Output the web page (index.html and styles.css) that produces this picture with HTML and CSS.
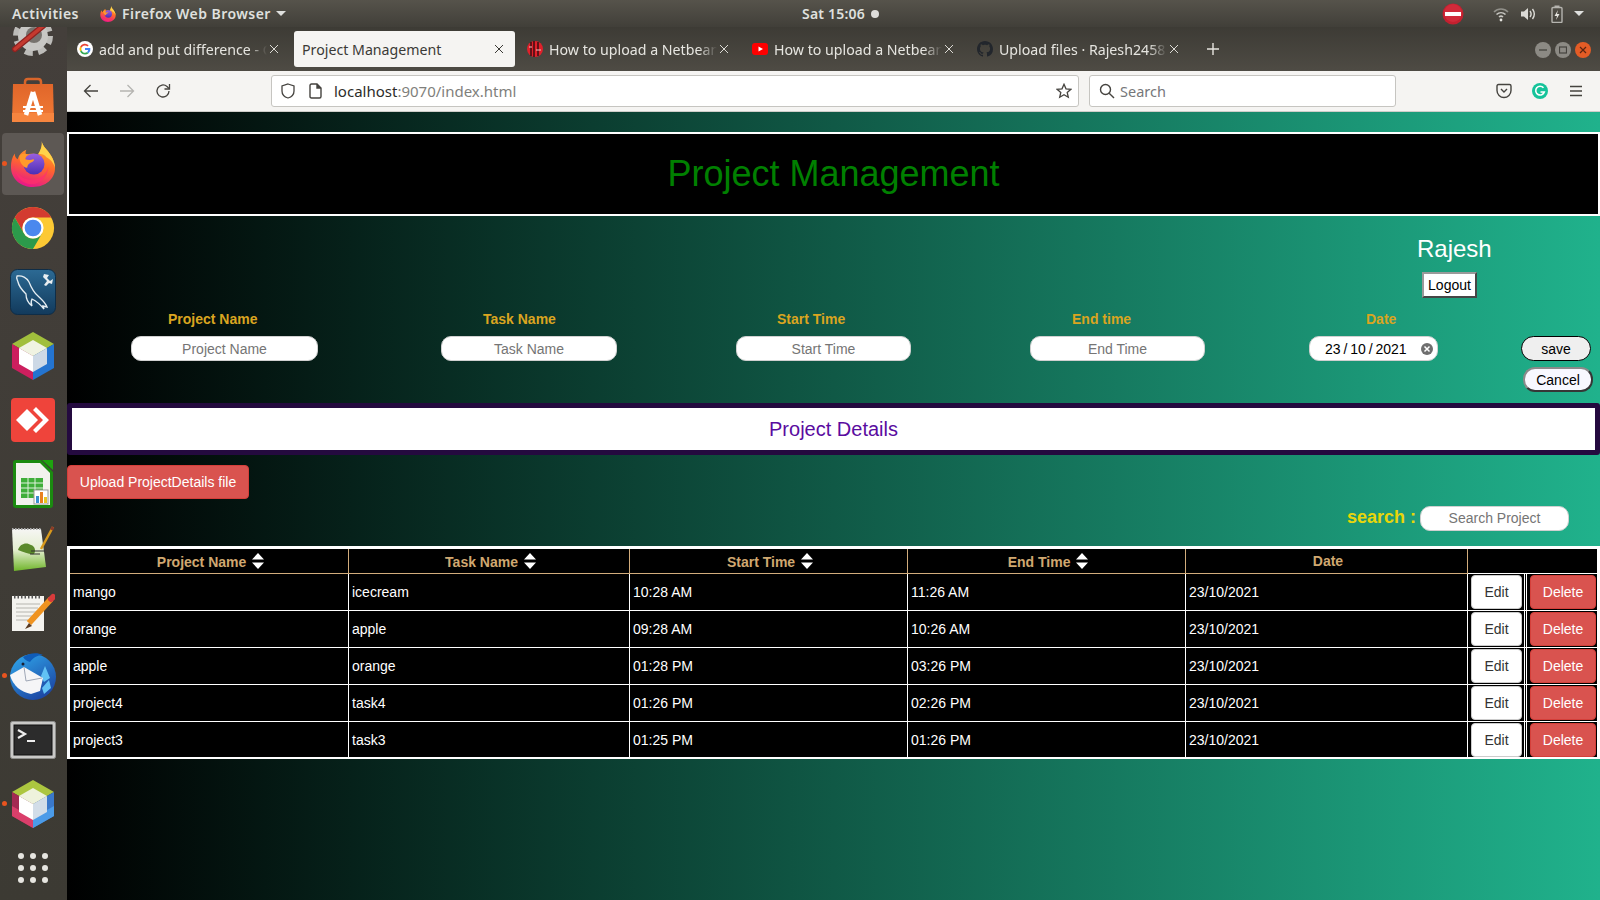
FILE: index.html
```html
<!DOCTYPE html>
<html lang="en">
<head>
<meta charset="utf-8">
<title>Project Management</title>
<link rel="stylesheet" href="styles.css">
</head>
<body>
<header class="topbar">
  <span class="tb-text activities">Activities</span>
  <svg class="tb-ff" width="16" height="16" viewBox="0 0 48 48">
    <defs>
      <linearGradient id="ffBody" x1="0.7" y1="0" x2="0.4" y2="1"><stop offset="0" stop-color="#ffc22e"/><stop offset="0.5" stop-color="#ff6a2a"/><stop offset="1" stop-color="#e8168a"/></linearGradient>
      <linearGradient id="ffGlobe" x1="0.5" y1="0" x2="0.5" y2="1"><stop offset="0" stop-color="#9a5fe0"/><stop offset="1" stop-color="#4a2fb5"/></linearGradient>
      <g id="ffIcon">
        <path d="M33 0c1 6 6 9 9 14 4 6 5 11 5 14 0 12-10 20-23 20C11 48 1 39 1 27 1 22 2 17 5 13c0 3 1 5 3 6 1-4 4-8 9-10-1 2-1 4 0 5 4-1 9-1 12 1 3-4 5-10 4-15z" fill="url(#ffBody)"/>
        <path d="M33 0c1 6 6 9 9 14 4 6 5 11 5 14-2-6-5-9-9-11-2-3-6-4-9-3 3-4 5-10 4-14z" fill="#ffd24a"/>
        <circle cx="25" cy="24" r="11" fill="url(#ffGlobe)"/>
        <path d="M4 26c2 10 12 16 22 14 7-1 12-6 14-13-1 11-9 18-18 18C13 45 6 37 4 26z" fill="#ff2f6d" opacity="0.75"/>
        <path d="M10 15c3-2 6-2 9-1-2 1-3 3-3 5 3 1 6 1 8 0 2 0 1 2-1 3-3 1-5 3-5 6-5-1-9-7-8-13z" fill="#ff9a2a"/>
      </g>
    </defs>
    <use href="#ffIcon"/>
  </svg>
  <span class="tb-text app-name">Firefox Web Browser</span>
  <span class="caret caret-app"></span>
  <span class="tb-text clock">Sat 15:06</span>
  <span class="clock-dot"></span>
  <svg class="no-entry" width="22" height="22" viewBox="0 0 22 22"><circle cx="11" cy="11" r="10.5" fill="#c3202f"/><circle cx="11" cy="10" r="9" fill="#d12a3a"/><rect x="3" y="9" width="16" height="4" fill="#fff"/></svg>
  <svg class="tray-wifi" width="16" height="16" viewBox="0 0 16 16" fill="none" stroke="#c9c8c3" stroke-width="1.6"><path d="M1 6c4-4 10-4 14 0" opacity=".55"/><path d="M3.5 8.5c2.6-2.4 6.4-2.4 9 0"/><path d="M6 11c1.2-1 2.8-1 4 0"/><circle cx="8" cy="14" r="1.4" fill="#e6e5e0" stroke="none"/></svg>
  <svg class="tray-vol" width="16" height="16" viewBox="0 0 16 16" fill="none" stroke="#dcdbd6" stroke-width="1.4"><path d="M1 5.5h3L8 2v12L4 10.5H1z" fill="#dcdbd6" stroke="none"/><path d="M10 5c1.2 1.6 1.2 4.400 0 6"/><path d="M12.500 3c2.200 3 2.200 7 0 10"/></svg>
  <svg class="tray-bat" width="12" height="18" viewBox="0 0 12 18" fill="none"><rect x="1" y="2.500" width="10" height="15" rx="1" stroke="#b5b4af" stroke-width="1.400"/><rect x="3.500" y="0.500" width="5" height="2" fill="#b5b4af"/><path d="M7 5L3.500 11H6L5 15l3.500-6H6z" fill="#e6e5e0"/></svg>
  <span class="caret caret-tray"></span>
</header>

<div class="desktop">
  <nav class="dock">
    <div class="dock-item">
      <svg width="46" height="46" viewBox="0 0 46 46"><circle cx="23" cy="23" r="15" fill="none" stroke="#bdbcb9" stroke-width="10" stroke-dasharray="7 4.800"/><circle cx="23" cy="23" r="15" fill="#c8c7c4"/><circle cx="24" cy="22" r="8" fill="#77736e"/><path d="M5 36L33 13" stroke="#8e2220" stroke-width="6" stroke-linecap="round"/><path d="M5 36L33 13" stroke="#c5392f" stroke-width="3.500" stroke-linecap="round"/></svg>
    </div>
    <div class="dock-item">
      <svg width="44" height="46" viewBox="0 0 44 46"><defs><linearGradient id="bag" x1="0" y1="0" x2="0" y2="1"><stop offset="0" stop-color="#e0662a"/><stop offset="1" stop-color="#f27b36"/></linearGradient></defs><path d="M14 10V5q0-3 3-3h10q3 0 3 3v5" fill="none" stroke="#d8652a" stroke-width="2.500"/><path d="M2 7h40l1 38H1z" fill="url(#bag)"/><path d="M1 36h42v9H1z" fill="#f6853f"/><path d="M22 15L15 38M22 15L29 38" stroke="#fff" stroke-width="4.500" fill="none"/><path d="M12 30h20M12 34h20" stroke="#fff" stroke-width="1.800"/></svg>
    </div>
    <div class="dock-item dock-active has-dot">
      <svg width="46" height="46" viewBox="0 0 48 48"><use href="#ffIcon"/></svg>
    </div>
    <div class="dock-item">
      <svg width="46" height="46" viewBox="0 0 48 48"><circle cx="24" cy="24" r="22" fill="#fcc934"/><path d="M24 13H43.050A22 22 0 0 0 4.950 13L14.470 29.500A11 11 0 0 1 24 13Z" fill="#d33b30"/><path d="M14.470 29.500L4.950 13A22 22 0 0 0 24 46L33.530 29.500A11 11 0 0 1 14.470 29.500Z" fill="#2c9a4b"/><circle cx="24" cy="24" r="11" fill="#fff"/><circle cx="24" cy="24" r="8.700" fill="#4a88ee"/></svg>
    </div>
    <div class="dock-item">
      <svg width="46" height="46" viewBox="0 0 46 46"><defs><linearGradient id="sql" x1="0" y1="0" x2="0" y2="1"><stop offset="0" stop-color="#2c6a94"/><stop offset="1" stop-color="#123a5c"/></linearGradient></defs><rect x="0.500" y="0.500" width="45" height="45" rx="7" fill="url(#sql)" stroke="#0f2d47"/><path d="M7 7c5-1 10 2 12 6 2 5 4 10 9 14 3 3 7 6 9 11l-4-1 1 3c-5-6-8-8-12-10-1 2-1 5 0 7-4-3-6-7-6-12-3-3-7-7-8-12-1-3-2-4-1-6z" fill="none" stroke="#e6eef3" stroke-width="1.300"/><path d="M34 5l-1 3 4 4-3 4 2 1 3-3 3 1 1-5-3 2-3-3 2-3z" fill="#e9eef1"/></svg>
    </div>
    <div class="dock-item">
      <svg width="42" height="48" viewBox="0 0 42 48"><path d="M21 0L42 12L21 24L0 12Z" fill="#a1bf3c"/><path d="M0 12L21 24V48L0 36Z" fill="#cc1f5e"/><path d="M42 12L21 24V48L42 36Z" fill="#2474d0"/><path d="M21 8L35 16L21 24L7 16Z" fill="#f0f3e2"/><path d="M7 16L21 24V40L7 32Z" fill="#fff"/><path d="M35 16L21 24V40L35 32Z" fill="#cdd9e6"/></svg>
    </div>
    <div class="dock-item">
      <svg width="44" height="44" viewBox="0 0 44 44"><rect width="44" height="44" rx="4" fill="#ef443b"/><path d="M16 11L27 22L16 33L5 22Z" fill="#fff"/><path d="M25 9L38 22L25 35L22 32L32 22L22 12Z" fill="#fff"/></svg>
    </div>
    <div class="dock-item">
      <svg width="40" height="48" viewBox="0 0 40 48"><path d="M3 0H28L40 12V45q0 3-3 3H3q-3 0-3-3V3q0-3 3-3z" fill="#1b8a10"/><path d="M3 3H27L37 13V45H3z" fill="#f2f2ee"/><path d="M29 0H40V10z" fill="#1ea30f"/><g fill="#3fae3a"><rect x="8" y="18" width="22" height="20"/></g><path d="M8 23h22M8 28h22M8 33h22M15 18v20M22 18v20" stroke="#dff1dc" stroke-width="1"/><rect x="21" y="30" width="14" height="14" fill="#fff" stroke="#999"/><rect x="23" y="36" width="3" height="7" fill="#3a8fd0"/><rect x="27" y="32" width="3" height="11" fill="#e8801f"/><rect x="31" y="37" width="3" height="6" fill="#e8c51f"/></svg>
    </div>
    <div class="dock-item">
      <svg width="44" height="46" viewBox="0 0 44 46"><defs><linearGradient id="npq" x1="0" y1="0" x2="0" y2="1"><stop offset="0" stop-color="#f6f6f4"/><stop offset="0.5" stop-color="#e4efcf"/><stop offset="1" stop-color="#6fb52a"/></linearGradient></defs><path d="M1 4H30L35 42L3 46Z" fill="url(#npq)"/><path d="M1 4H30" stroke="#aaa" stroke-width="2" stroke-dasharray="1.500 1.500"/><path d="M7 25c2-7 9-8 13-5 4 1 5 6 3 9-4 1-10-2-16-4z" fill="#5a8a2a"/><path d="M19 29h10M20 26h14" stroke="#333" stroke-width="1.200"/><path d="M42 2L30 24" stroke="#d89a1c" stroke-width="2.500"/><path d="M42 2l-1.500 3" stroke="#8a3b2a" stroke-width="3"/></svg>
    </div>
    <div class="dock-item">
      <svg width="44" height="38" viewBox="0 0 44 38"><rect x="1" y="3" width="32" height="35" fill="#f4f3ef"/><path d="M3 4h28" stroke="#555" stroke-width="3" stroke-dasharray="1.500 2"/><path d="M5 11h24M5 15h22M5 19h24M5 23h18M5 27h12" stroke="#b6b5b0" stroke-width="1.200"/><path d="M40 6L18 30" stroke="#ef9320" stroke-width="6"/><path d="M40 6l2-2" stroke="#d83b3b" stroke-width="6" stroke-linecap="round"/><path d="M18 30l-4 6 7-3z" fill="#5a3a20"/></svg>
    </div>
    <div class="dock-item has-dot">
      <svg width="48" height="48" viewBox="0 0 48 48"><defs><linearGradient id="tb" x1="0.200" y1="0" x2="0.800" y2="1"><stop offset="0" stop-color="#2fa3e8"/><stop offset="1" stop-color="#1b3f9e"/></linearGradient></defs><circle cx="24" cy="25" r="23" fill="url(#tb)"/><path d="M14 5c6-4 14-5 20-2-6 0-10 3-13 7-3-1-5-2-7-5z" fill="#0f5cb8"/><path d="M36 14l5 12-6 4-3-6zM40 28l2 8-7 6-2-6z" fill="#62c2f4"/><path d="M1 23L15 15 34 26 31 39 22 42C12 40 4 34 1 23z" fill="#f5f5f7"/><path d="M15 15L17 29 33 26" fill="none" stroke="#9fa7b6" stroke-width="1"/><circle cx="14" cy="12" r="1.500" fill="#1a1f33"/></svg>
    </div>
    <div class="dock-item">
      <svg width="46" height="38" viewBox="0 0 46 38"><rect x="0.500" y="0.500" width="45" height="37" rx="2" fill="#c9c9c7" stroke="#8e8e8c"/><rect x="4" y="4" width="38" height="30" fill="#2c2c2c" stroke="#111"/><path d="M8 9l7 4-7 4" fill="none" stroke="#eee" stroke-width="2.200"/><path d="M17 20h8" stroke="#eee" stroke-width="2"/></svg>
    </div>
    <div class="dock-item has-dot">
      <svg width="42" height="48" viewBox="0 0 42 48"><path d="M21 0L42 12L21 24L0 12Z" fill="#acc63f"/><path d="M0 12L21 24V48L0 36Z" fill="#a32a52"/><path d="M0 26L21 38V48L0 36Z" fill="#da3f6b"/><path d="M42 12L21 24V48L42 36Z" fill="#3a78c9"/><path d="M42 26L21 38V48L42 36Z" fill="#4b9be8"/><path d="M21 8L35 16L21 24L7 16Z" fill="#eef2dc"/><path d="M7 16L21 24V40L7 32Z" fill="#fff"/><path d="M35 16L21 24V40L35 32Z" fill="#d2dde8"/></svg>
    </div>
    <div class="dock-item">
      <svg width="30" height="30" viewBox="0 0 30 30" fill="#e6e5e0"><circle cx="3" cy="3" r="3"/><circle cx="15" cy="3" r="3"/><circle cx="27" cy="3" r="3"/><circle cx="3" cy="15" r="3"/><circle cx="15" cy="15" r="3"/><circle cx="27" cy="15" r="3"/><circle cx="3" cy="27" r="3"/><circle cx="15" cy="27" r="3"/><circle cx="27" cy="27" r="3"/></svg>
    </div>
  </nav>

  <div class="browser">
    <div class="tabstrip">
      <div class="tab">
        <svg class="favicon" width="16" height="16" viewBox="0 0 16 16"><circle cx="8" cy="8" r="8" fill="#fff"/><path d="M8 4.500a3.500 3.500 0 0 1 2.400.950l1.300-1.300A5.500 5.500 0 0 0 3.100 5.500l1.500 1.200A3.500 3.500 0 0 1 8 4.500z" fill="#ea4335"/><path d="M3.100 5.500a5.500 5.500 0 0 0 0 5l1.500-1.200a3.500 3.500 0 0 1 0-2.600z" fill="#fbbc05"/><path d="M8 13.500a5.400 5.400 0 0 0 3.600-1.300l-1.500-1.100A3.500 3.500 0 0 1 4.600 9.300l-1.500 1.200A5.500 5.500 0 0 0 8 13.500z" fill="#34a853"/><path d="M13.300 7H8v2.100h3.100a2.700 2.700 0 0 1-1 2l1.500 1.100A5.300 5.300 0 0 0 13.300 7z" fill="#4285f4"/></svg>
        <span class="tab-title">add and put difference - G</span>
        <svg class="tab-close" width="10" height="10" viewBox="0 0 10 10"><path d="M1 1l8 8M9 1l-8 8"/></svg>
      </div>
      <div class="tab tab-active">
        <span class="tab-title">Project Management</span>
        <svg class="tab-close" width="10" height="10" viewBox="0 0 10 10"><path d="M1 1l8 8M9 1l-8 8"/></svg>
      </div>
      <div class="tab">
        <svg class="favicon" width="16" height="16" viewBox="0 0 16 16"><circle cx="8" cy="8" r="8" fill="#e0202a"/><path d="M4 1v14M7 0v16M11 1v14" stroke="#3a0d10" stroke-width="1.500"/><path d="M2 6h3M9 9h5" stroke="#f5c0c0" stroke-width="1"/></svg>
        <span class="tab-title">How to upload a Netbean</span>
        <svg class="tab-close" width="10" height="10" viewBox="0 0 10 10"><path d="M1 1l8 8M9 1l-8 8"/></svg>
      </div>
      <div class="tab">
        <svg class="favicon" width="16" height="16" viewBox="0 0 16 16"><rect y="2" width="16" height="12" rx="3" fill="#f00"/><path d="M6.500 5.500L11 8l-4.500 2.500z" fill="#fff"/></svg>
        <span class="tab-title">How to upload a Netbean</span>
        <svg class="tab-close" width="10" height="10" viewBox="0 0 10 10"><path d="M1 1l8 8M9 1l-8 8"/></svg>
      </div>
      <div class="tab">
        <svg class="favicon" width="16" height="16" viewBox="0 0 16 16"><path fill="#22262c" d="M8 0C3.580 0 0 3.580 0 8c0 3.540 2.290 6.530 5.470 7.590.4.070.55-.17.55-.38 0-.19-.01-.82-.01-1.490-2.010.37-2.530-.49-2.690-.94-.09-.23-.48-.94-.82-1.130-.28-.15-.68-.52-.01-.53.63-.01 1.080.58 1.230.82.720 1.210 1.870.87 2.330.66.070-.52.280-.87.510-1.070-1.780-.2-3.640-.89-3.640-3.950 0-.87.310-1.590.820-2.150-.08-.2-.36-1.020.08-2.120 0 0 .67-.21 2.200.82.640-.18 1.320-.27 2-.27s1.360.09 2 .27c1.530-1.040 2.200-.82 2.200-.82.440 1.100.16 1.920.08 2.120.51.560.82 1.270.82 2.150 0 3.070-1.870 3.750-3.650 3.950.29.250.54.730.54 1.480 0 1.070-.01 1.930-.01 2.200 0 .21.150.46.550.38A8.010 8.010 0 0 0 16 8c0-4.420-3.580-8-8-8z"/></svg>
        <span class="tab-title">Upload files · Rajesh2458</span>
        <svg class="tab-close" width="10" height="10" viewBox="0 0 10 10"><path d="M1 1l8 8M9 1l-8 8"/></svg>
      </div>
      <svg class="new-tab" width="14" height="14" viewBox="0 0 14 14"><path d="M7 1v12M1 7h12" stroke="#e8e6e0" stroke-width="1.400"/></svg>
      <div class="winctl">
        <span class="wbtn"><svg width="8" height="8" viewBox="0 0 8 8"><path d="M0 4h8" stroke="#45433e" stroke-width="1.300"/></svg></span>
        <span class="wbtn"><svg width="8" height="8" viewBox="0 0 8 8"><rect x="0.500" y="1" width="7" height="6" fill="none" stroke="#45433e" stroke-width="1.200"/></svg></span>
        <span class="wbtn wbtn-close"><svg width="8" height="8" viewBox="0 0 8 8"><path d="M1 1l6 6M7 1l-6 6" stroke="#5a2410" stroke-width="1.200"/></svg></span>
      </div>
    </div>

    <div class="navbar">
      <svg class="nav-back" width="16" height="16" viewBox="0 0 16 16" fill="none" stroke="#45433f" stroke-width="1.300"><path d="M15 8H1.500M7.500 2L1.500 8l6 6"/></svg>
      <svg class="nav-fwd" width="16" height="16" viewBox="0 0 16 16" fill="none" stroke="#b5b4b1" stroke-width="1.300"><path d="M1 8h13.500M8.500 2l6 6-6 6"/></svg>
      <svg class="nav-reload" width="16" height="16" viewBox="0 0 16 16" fill="none" stroke="#45433f" stroke-width="1.300"><path d="M14 8a6 6 0 1 1-2-4.500L14 5.500"/><path d="M14.500 1v5h-5" stroke-width="1.300"/></svg>
      <div class="urlbar">
        <svg class="url-shield" width="16" height="16" viewBox="0 0 16 16" fill="none" stroke="#45433f" stroke-width="1.300"><path d="M8 1l6 2v5c0 3.500-2.500 6-6 7-3.500-1-6-3.500-6-7V3z"/></svg>
        <svg class="url-page" width="13" height="16" viewBox="0 0 13 16" fill="none" stroke="#45433f" stroke-width="1.400"><path d="M1 2.500q0-1.500 1.500-1.500H8l4 4v8.500q0 1.500-1.500 1.500h-8Q1 15 1 13.500z"/><path d="M8 1v4h4" fill="#45433f"/></svg>
        <span class="url-text">localhost<span class="url-dim">:9070/index.html</span></span>
        <svg class="url-star" width="16" height="16" viewBox="0 0 16 16" fill="none" stroke="#45433f" stroke-width="1.300"><path d="M8 1.300l2 4.500 4.900.5-3.700 3.200 1.100 4.800L8 11.800l-4.300 2.500 1.100-4.800L1.100 6.300 6 5.800z"/></svg>
      </div>
      <div class="searchbar">
        <svg width="16" height="16" viewBox="0 0 16 16" fill="none" stroke="#45433f" stroke-width="1.400"><circle cx="6.500" cy="6.500" r="5"/><path d="M10.200 10.200L15 15"/></svg>
        <span class="search-ph">Search</span>
      </div>
      <svg class="nav-pocket" width="16" height="16" viewBox="0 0 16 16" fill="none" stroke="#45433f" stroke-width="1.400"><path d="M1 3q0-1.500 1.500-1.500h11Q15 1.500 15 3v4.500a7 7 0 0 1-14 0z"/><path d="M5 6l3 3 3-3"/></svg>
      <svg class="nav-gram" width="16" height="16" viewBox="0 0 16 16"><circle cx="8" cy="8" r="8" fill="#15c39a"/><path d="M11.500 4.800A4.400 4.400 0 1 0 12.300 9H8.500" fill="none" stroke="#fff" stroke-width="1.600"/></svg>
      <svg class="nav-menu" width="14" height="12" viewBox="0 0 14 12" stroke="#45433f" stroke-width="1.300"><path d="M1 1.500h12M1 6h12M1 10.500h12"/></svg>
    </div>

    <main class="page">
      <h1 class="app-title">Project Management</h1>

      <div class="user-block">
        <div class="user-name">Rajesh</div>
        <button class="logout-btn">Logout</button>
      </div>

      <form class="entry-form">
        <div class="field field-project">
          <label class="field-label">Project Name</label>
          <input class="pill-input" type="text" placeholder="Project Name">
        </div>
        <div class="field field-task">
          <label class="field-label">Task Name</label>
          <input class="pill-input" type="text" placeholder="Task Name">
        </div>
        <div class="field field-start">
          <label class="field-label">Start Time</label>
          <input class="pill-input" type="text" placeholder="Start Time">
        </div>
        <div class="field field-end">
          <label class="field-label">End time</label>
          <input class="pill-input" type="text" placeholder="End Time">
        </div>
        <div class="field field-date">
          <label class="field-label">Date</label>
          <div class="date-input">
            <span class="date-value">23 / 10 / 2021</span>
            <svg width="12" height="12" viewBox="0 0 12 12"><circle cx="6" cy="6" r="6" fill="#6e6e6e"/><path d="M3.500 3.500l5 5M8.500 3.500l-5 5" stroke="#fff" stroke-width="1.500"/></svg>
          </div>
        </div>
        <div class="form-actions">
          <button type="button" class="save-btn">save</button>
          <button type="button" class="cancel-btn">Cancel</button>
        </div>
      </form>

      <h2 class="details-title">Project Details</h2>

      <button class="upload-btn">Upload ProjectDetails file</button>

      <div class="search-row">
        <span class="search-label">search :</span>
        <input class="pill-input search-input" type="text" placeholder="Search Project">
      </div>

      <table class="data-table">
        <colgroup>
          <col class="c1"><col class="c2"><col class="c3"><col class="c4"><col class="c5"><col class="c6"><col class="c7">
        </colgroup>
        <thead>
          <tr>
            <th class="th-sort">Project Name <svg class="sort" width="12" height="16" viewBox="0 0 12 16" fill="#fff"><path d="M6 0l6 6.500H0zM0 9.500h12L6 16z"/></svg></th>
            <th class="th-sort">Task Name <svg class="sort" width="12" height="16" viewBox="0 0 12 16" fill="#fff"><path d="M6 0l6 6.500H0zM0 9.500h12L6 16z"/></svg></th>
            <th class="th-sort">Start Time <svg class="sort" width="12" height="16" viewBox="0 0 12 16" fill="#fff"><path d="M6 0l6 6.500H0zM0 9.500h12L6 16z"/></svg></th>
            <th class="th-sort">End Time <svg class="sort" width="12" height="16" viewBox="0 0 12 16" fill="#fff"><path d="M6 0l6 6.500H0zM0 9.500h12L6 16z"/></svg></th>
            <th class="th-date">Date</th>
            <th class="th-actions" colspan="2"></th>
          </tr>
        </thead>
        <tbody>
          <tr><td>mango</td><td>icecream</td><td>10:28 AM</td><td>11:26 AM</td><td>23/10/2021</td><td class="td-edit"><button class="edit-btn">Edit</button></td><td class="td-del"><button class="del-btn">Delete</button></td></tr>
          <tr><td>orange</td><td>apple</td><td>09:28 AM</td><td>10:26 AM</td><td>23/10/2021</td><td class="td-edit"><button class="edit-btn">Edit</button></td><td class="td-del"><button class="del-btn">Delete</button></td></tr>
          <tr><td>apple</td><td>orange</td><td>01:28 PM</td><td>03:26 PM</td><td>23/10/2021</td><td class="td-edit"><button class="edit-btn">Edit</button></td><td class="td-del"><button class="del-btn">Delete</button></td></tr>
          <tr><td>project4</td><td>task4</td><td>01:26 PM</td><td>02:26 PM</td><td>23/10/2021</td><td class="td-edit"><button class="edit-btn">Edit</button></td><td class="td-del"><button class="del-btn">Delete</button></td></tr>
          <tr><td>project3</td><td>task3</td><td>01:25 PM</td><td>01:26 PM</td><td>23/10/2021</td><td class="td-edit"><button class="edit-btn">Edit</button></td><td class="td-del"><button class="del-btn">Delete</button></td></tr>
        </tbody>
      </table>
    </main>
  </div>
</div>
</body>
</html>
```
FILE: styles.css
```css
* { box-sizing: border-box; }
html, body { margin: 0; padding: 0; }
body {
  width: 1600px;
  height: 900px;
  overflow: hidden;
  display: flex;
  flex-direction: column;
  font-family: "Liberation Sans", Arial, sans-serif;
  font-size: 14px;
  background: #000;
}

/* GNOME top bar */
.topbar {
  height: 27px;
  flex: none;
  display: flex;
  align-items: center;
  background: linear-gradient(#56534b, #413f39);
}
.tb-text {
  font-family: "Noto Sans", sans-serif;
  font-weight: 600;
  font-size: 14px;
  letter-spacing: 0.45px;
  color: #dfe0de;
  white-space: nowrap;
}
.activities { margin-left: 12px; width: 68px; }
.tb-ff { margin-left: 20px; }
.app-name { margin-left: 6px; width: 149px; }
.caret {
  width: 0;
  height: 0;
  border-left: 5px solid transparent;
  border-right: 5px solid transparent;
  border-top: 5px solid #dfe0de;
}
.caret-app { margin-left: 5px; }
.clock { margin-left: 516px; width: 64px; letter-spacing: 0.2px; }
.clock-dot {
  width: 8px;
  height: 8px;
  border-radius: 50%;
  background: #dfdedb;
  margin-left: 5px;
}
.no-entry { margin-left: 563px; }
.tray-wifi { margin-left: 29px; }
.tray-vol { margin-left: 11px; }
.tray-bat { margin-left: 15px; }
.caret-tray { margin-left: 11px; }

/* Layout under the bar */
.desktop {
  flex: 1;
  display: flex;
  min-height: 0;
}

/* Dock */
.dock {
  width: 67px;
  flex: none;
  display: flex;
  flex-direction: column;
  align-items: flex-start;
  padding-left: 2px;
  overflow: hidden;
  background: linear-gradient(#443f3b, #3c3a33);
}
.dock-item {
  position: relative;
  flex: none;
  width: 62px;
  height: 64px;
  display: flex;
  align-items: center;
  justify-content: center;
  border-radius: 4px;
}
.dock-item:first-child { margin-top: -23px; }
.dock-active { background: #5d5854; height: 62px; margin: 1px 0; }
.has-dot::before {
  content: "";
  position: absolute;
  left: 0;
  top: 50%;
  width: 5px;
  height: 5px;
  margin-top: -3px;
  border-radius: 50%;
  background: #e9541f;
}

/* Browser */
.browser {
  flex: 1;
  display: flex;
  flex-direction: column;
  min-width: 0;
}
.tabstrip {
  height: 44px;
  flex: none;
  display: flex;
  align-items: flex-start;
  gap: 4px;
  padding: 4px 0 0 2px;
  background: linear-gradient(#3d3b35, #4e4b44);
}
.tab {
  width: 221px;
  height: 36px;
  flex: none;
  display: flex;
  align-items: center;
  padding-left: 8px;
  border-radius: 3px;
  color: #e6e5e0;
  font-family: "Noto Sans", sans-serif;
  font-size: 14.2px;
}
.tab-active { background: #f5f4f2; color: #3b3a36; }
.favicon { flex: none; margin-right: 6px; }
.tab-title {
  width: 168px;
  flex: none;
  overflow: hidden;
  white-space: nowrap;
  -webkit-mask-image: linear-gradient(to right, #000 150px, transparent 168px);
  mask-image: linear-gradient(to right, #000 150px, transparent 168px);
}
.tab-close {
  flex: none;
  margin-left: 2px;
  fill: none;
  stroke: #dcdad5;
  stroke-width: 1;
}
.tab-active .tab-title { width: 190px; -webkit-mask-image: none; mask-image: none; }
.tab-active .tab-close { stroke: #3b3a36; margin-left: 2px; }
.new-tab { flex: none; margin: 11px 0 0 12px; }
.winctl {
  display: flex;
  gap: 4px;
  margin: 11px 0 0 auto;
  padding-right: 9px;
}
.wbtn {
  width: 16px;
  height: 16px;
  border-radius: 50%;
  background: #8c8a84;
  display: flex;
  align-items: center;
  justify-content: center;
}
.wbtn-close { background: #e35c26; }

.navbar {
  height: 41px;
  flex: none;
  display: flex;
  align-items: center;
  background: #f5f4f2;
  border-bottom: 1px solid #cfcdc9;
  font-family: "Noto Sans", sans-serif;
}
.nav-back { margin-left: 16px; }
.nav-fwd { margin-left: 20px; }
.nav-reload { margin-left: 20px; }
.urlbar, .searchbar {
  height: 32px;
  display: flex;
  align-items: center;
  background: #fff;
  border: 1px solid #c6c5c1;
  border-radius: 3px;
}
.urlbar { width: 808px; margin-left: 100px; padding-left: 8px; }
.url-page { margin-left: 13px; }
.url-text {
  margin-left: 12px;
  font-size: 15px;
  color: #2c2c2a;
}
.url-dim { color: #7f7f7c; }
.url-star { margin-left: auto; margin-right: 6px; }
.searchbar { width: 307px; margin-left: 10px; padding-left: 9px; }
.search-ph { margin-left: 5px; font-size: 14.500px; color: #76777a; }
.nav-pocket { margin-left: 100px; }
.nav-gram { margin-left: 20px; }
.nav-menu { margin-left: 21px; }

/* Page */
.page {
  flex: 1;
  min-height: 0;
  padding-top: 20px;
  background: linear-gradient(to right, #000, #20b28c);
}
.app-title {
  margin: 0;
  height: 84px;
  line-height: 80px;
  text-align: center;
  font-size: 36px;
  font-weight: 400;
  color: #008000;
  background: #000;
  border: 2px solid #fff;
}
.user-block { padding: 19px 0 0 1350px; height: 95px; }
.user-name { font-size: 24px; line-height: 28px; color: #fff; }
.logout-btn {
  display: block;
  width: 55px;
  height: 26px;
  margin: 9px 0 0 5px;
  padding: 0;
  font: 14px "Liberation Sans", Arial, sans-serif;
  color: #000;
  background: #fff;
  border: 2px outset #9a9a9a;
}

.entry-form {
  display: flex;
  align-items: flex-start;
  height: 92px;
}
.field-label {
  display: block;
  height: 16px;
  line-height: 16px;
  margin-bottom: 9px;
  font-weight: 700;
  color: #daa520;
  white-space: nowrap;
}
.pill-input {
  display: block;
  width: 100%;
  height: 25px;
  padding: 0;
  text-align: center;
  font: 14px "Liberation Sans", Arial, sans-serif;
  background: #fff;
  border: 1px solid #d0d0d0;
  border-radius: 10px;
}
.pill-input::placeholder { color: #757575; opacity: 1; }
.field-project { width: 187px; margin-left: 64px; }
.field-project .field-label { margin-left: 37px; }
.field-task { width: 176px; margin-left: 123px; }
.field-task .field-label { margin-left: 42px; }
.field-start { width: 175px; margin-left: 119px; }
.field-start .field-label { margin-left: 41px; }
.field-end { width: 175px; margin-left: 119px; }
.field-end .field-label { margin-left: 42px; }
.field-date { width: 129px; margin-left: 104px; }
.field-date .field-label { margin-left: 57px; }
.date-input {
  height: 25px;
  display: flex;
  align-items: center;
  justify-content: space-between;
  padding: 0 4px 0 15px;
  color: #000;
  background: #fff;
  border: 1px solid #d0d0d0;
  border-radius: 10px;
}
.date-value { word-spacing: -1px; }
.form-actions {
  width: 72px;
  margin-left: 83px;
  padding-top: 25px;
}
.save-btn, .cancel-btn {
  display: block;
  height: 25px;
  padding: 0;
  font: 14px "Liberation Sans", Arial, sans-serif;
  color: #000;
}
.save-btn {
  width: 70px;
  background: #efefef;
  border: 1px solid #000;
  border-radius: 13px;
}
.cancel-btn {
  width: 70px;
  margin: 6px 0 0 2px;
  background: #f8f8ff;
  border: 2px outset #8a8a8a;
  border-radius: 12px;
}

.details-title {
  margin: 0;
  height: 52px;
  line-height: 42px;
  text-align: center;
  font-size: 20px;
  font-weight: 400;
  color: #5a0ca0;
  background: #fff;
  border: 5px solid #240a3f;
  border-radius: 3px;
}
.upload-btn {
  display: block;
  width: 182px;
  height: 34px;
  margin: 10px 0 0 0;
  padding: 0;
  font: 14px "Liberation Sans", Arial, sans-serif;
  color: #fff;
  background: #d9534f;
  border: 1px solid #d43f3a;
  border-radius: 4px;
}
.search-row {
  display: flex;
  align-items: center;
  justify-content: flex-end;
  gap: 4px;
  height: 25px;
  margin-top: 7px;
  padding-right: 31px;
}
.search-label { font-size: 18px; font-weight: 700; color: #e8d60a; margin-bottom: 2px; }
.search-input { width: 149px; padding-bottom: 2px; }

/* Table */
.data-table {
  width: 1533px;
  margin-top: 15px;
  table-layout: fixed;
  border-collapse: separate;
  border-spacing: 0;
  background: #000;
  border: 3px solid #fff;
  border-bottom-width: 2px;
}
.c1 { width: 279px; }
.c2 { width: 281px; }
.c3 { width: 278px; }
.c4 { width: 278px; }
.c5 { width: 282px; }
.c6 { width: 59px; }
.c7 { width: 70px; }
.data-table th {
  height: 25px;
  padding: 0;
  font-weight: 700;
  color: #d0a870;
  text-align: center;
  border-right: 1px solid #d2ad7c;
  border-bottom: 1px solid #d2ad7c;
}
.data-table th.th-sort { padding: 1px 0 0 3px; }
.data-table th.th-date { padding-left: 3px; }
.data-table th.th-actions { border-right: 0; border-bottom-color: #fff; }
.sort { vertical-align: -2px; margin-left: 2px; }
.data-table td {
  height: 37px;
  padding: 0 3px;
  color: #fff;
  border-right: 1px solid #fff;
  border-bottom: 1px solid #fff;
}
.data-table tbody tr:last-child td { height: 35px; border-bottom: 0; }
.data-table tbody tr:last-child td.td-edit,
.data-table tbody tr:last-child td.td-del { vertical-align: top; padding-top: 1px; }
.data-table td.td-edit {
  padding: 0 0 0 3px;
  border-right: 3px double #fff;
}
.data-table td.td-del {
  padding: 0 0 0 3px;
  border-right: 0;
}
.edit-btn, .del-btn {
  display: block;
  height: 34px;
  padding: 0;
  font: 14px "Liberation Sans", Arial, sans-serif;
  border-radius: 4px;
}
.edit-btn { width: 51px; color: #333; background: #fff; border: 1px solid #ccc; }
.del-btn { width: 66px; color: #fff; background: #d9534f; border: 1px solid #d43f3a; }
```
